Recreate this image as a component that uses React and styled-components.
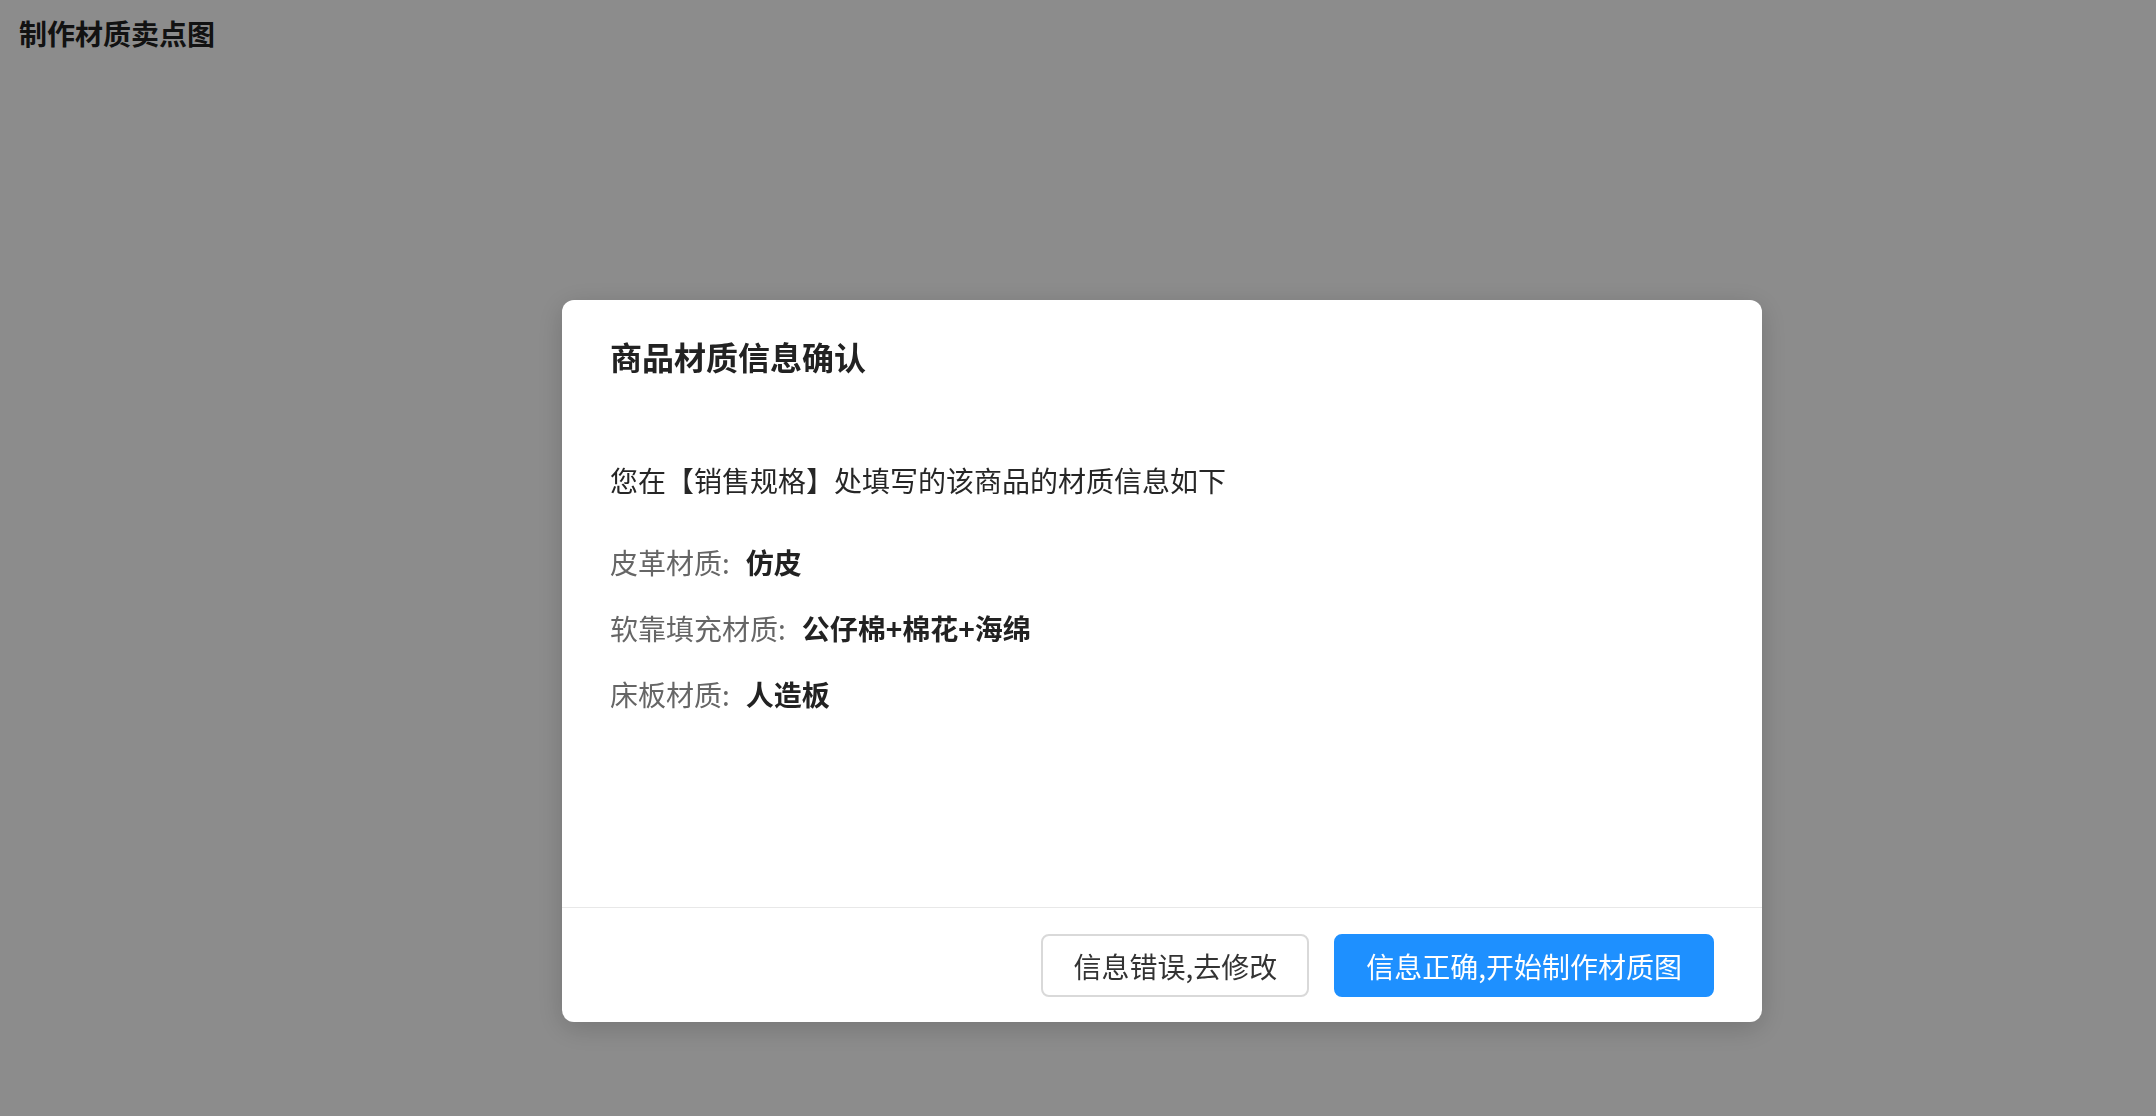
import React from "react";
import styled, { createGlobalStyle } from "styled-components";

const GlobalStyle = createGlobalStyle`
  html, body {
    margin: 0;
    padding: 0;
    background: #ffffff;
    font-family: "Noto Sans CJK SC", "Noto Sans", sans-serif;
  }
  * { box-sizing: border-box; }
`;

const Page = styled.div`
  min-height: 1116px;
  padding: 13px 19px;
`;

const PageTitle = styled.h1`
  margin: 0;
  font-size: 28px;
  line-height: 40px;
  font-weight: 700;
  color: #222;
`;

const Overlay = styled.div`
  position: fixed;
  inset: 0;
  background: rgba(0, 0, 0, 0.45);
  display: flex;
  align-items: flex-start;
  padding: 300px 0 0 562px;
`;

const Dialog = styled.div`
  width: 1200px;
  height: 722px;
  background: #ffffff;
  border-radius: 12px;
  box-shadow: 0 6px 28px rgba(0, 0, 0, 0.18);
  display: flex;
  flex-direction: column;
  overflow: hidden;
`;

const Header = styled.div`
  padding: 32px 48px 0;
`;

const Title = styled.h2`
  margin: 0;
  font-size: 32px;
  line-height: 48px;
  font-weight: 700;
  color: #222;
`;

const Body = styled.div`
  flex: 1;
  padding: 67px 48px 0;
`;

const Intro = styled.p`
  margin: 0 0 16px;
  font-size: 28px;
  line-height: 66px;
  color: #262626;
`;

const Row = styled.div`
  display: flex;
  align-items: baseline;
  font-size: 28px;
  line-height: 66px;
`;

const Label = styled.span`
  color: #666;
`;

const Value = styled.span`
  margin-left: 16px;
  color: #222;
  font-weight: 700;
`;

const Footer = styled.div`
  border-top: 1px solid #e8e8e8;
  padding: 26px 48px 25px;
  display: flex;
  justify-content: flex-end;
  gap: 25px;
`;

const Button = styled.button`
  height: 63px;
  padding: 0 ${(p) => (p.$primary ? "30px" : "30px")};
  border-radius: 8px;
  border: 2px solid ${(p) => (p.$primary ? "#1e90ff" : "#d9d9d9")};
  background: ${(p) => (p.$primary ? "#1e90ff" : "#ffffff")};
  color: ${(p) => (p.$primary ? "#ffffff" : "#333")};
  font-family: inherit;
  font-size: 28px;
  line-height: 1;
  cursor: pointer;
`;

const materials = [
  { label: "皮革材质:", value: "仿皮" },
  { label: "软靠填充材质:", value: "公仔棉+棉花+海绵" },
  { label: "床板材质:", value: "人造板" },
];

export default function App() {
  return (
    <>
      <GlobalStyle />
      <Page>
        <PageTitle>制作材质卖点图</PageTitle>
      </Page>
      <Overlay>
        <Dialog>
          <Header>
            <Title>商品材质信息确认</Title>
          </Header>
          <Body>
            <Intro>您在【销售规格】处填写的该商品的材质信息如下</Intro>
            {materials.map((m) => (
              <Row key={m.label}>
                <Label>{m.label}</Label>
                <Value>{m.value}</Value>
              </Row>
            ))}
          </Body>
          <Footer>
            <Button>信息错误,去修改</Button>
            <Button $primary>信息正确,开始制作材质图</Button>
          </Footer>
        </Dialog>
      </Overlay>
    </>
  );
}
